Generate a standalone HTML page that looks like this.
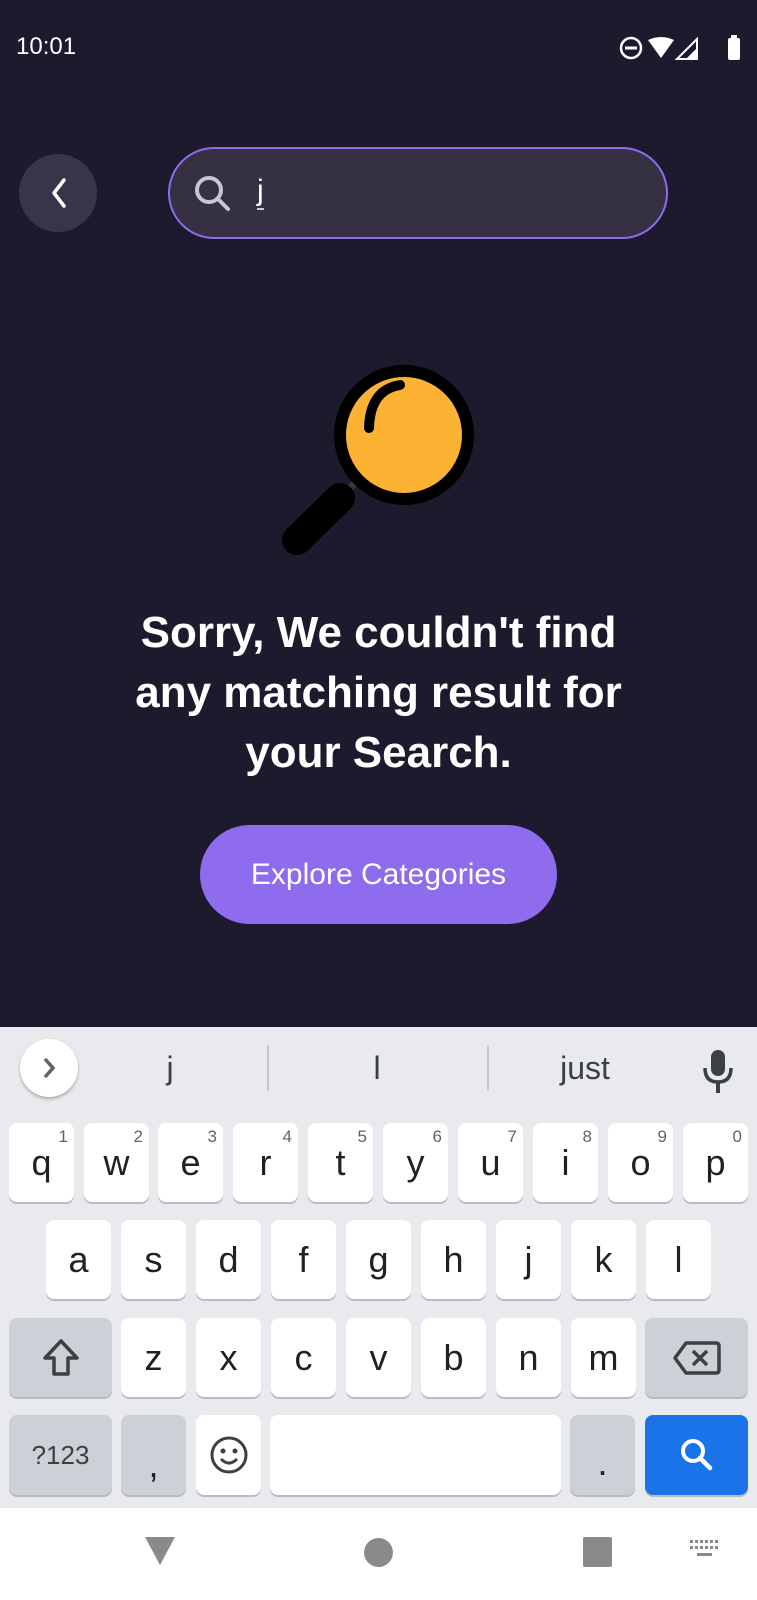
<!DOCTYPE html>
<html><head><meta charset="utf-8"><style>
*{margin:0;padding:0;box-sizing:border-box}
body{width:757px;height:1600px;overflow:hidden;background:#1e1a2d;font-family:"Liberation Sans",sans-serif;position:relative}
.abs{position:absolute}
.key{position:absolute;background:#fff;border-radius:8px;box-shadow:0 2px 0 #b9bcc2;color:#202124;font-size:36px;text-align:center;display:flex;align-items:center;justify-content:center}
.key.g{background:#cdd0d6}
.key sup{position:absolute;top:4px;right:6px;font-size:17px;color:#5f6368}
</style></head><body>
<div class="abs" style="left:16px;top:33px;color:#fff;font-size:24px">10:01</div>
<svg class="abs" style="left:618px;top:34px" width="126" height="28" viewBox="0 0 126 28">
<circle cx="13" cy="14" r="10" fill="none" stroke="#fff" stroke-width="2.5"/><rect x="7" y="12.5" width="12" height="3" fill="#fff"/>
<path d="M30 6 Q43 0 56 6 L43 24 Z" fill="#fff"/>
<path d="M79 5 L79 25 L59 25 Z" fill="none" stroke="#fff" stroke-width="2"/><path d="M79 5 L79 25 L68 25 L79 14 Z" fill="#fff"/>
<rect x="110" y="4" width="12" height="22" rx="2" fill="#fff"/><rect x="113" y="1" width="6" height="4" fill="#fff"/>
</svg>
<div class="abs" style="left:19px;top:154px;width:78px;height:78px;border-radius:50%;background:#38344a"></div>
<svg class="abs" style="left:19px;top:154px" width="78" height="78"><path d="M45 26 L35 39 L45 52" fill="none" stroke="#fff" stroke-width="3.5" stroke-linecap="round" stroke-linejoin="round"/></svg>
<div class="abs" style="left:168px;top:147px;width:500px;height:92px;border-radius:46px;background:#353142;border:2px solid #8e6cef"></div>
<svg class="abs" style="left:192px;top:173px" width="42" height="42"><circle cx="17" cy="17" r="12" fill="none" stroke="#c9c6d0" stroke-width="4"/><path d="M26 26 L36 36" stroke="#c9c6d0" stroke-width="4" stroke-linecap="round"/></svg>
<div class="abs" style="left:257px;top:174px;color:#fff;font-size:30px;border-bottom:2px solid #ccc;line-height:34px">j</div>
<svg class="abs" style="left:270px;top:360px" width="220" height="200">
<path d="M70 138 L90 118" stroke="#3a3a3a" stroke-width="7"/>
<path d="M27 180 L70 138" stroke="#000" stroke-width="30" stroke-linecap="round"/>
<circle cx="134" cy="75" r="64" fill="#fcb334" stroke="#000" stroke-width="12"/>
<path d="M99 68 Q100 30 130 25" fill="none" stroke="#000" stroke-width="10" stroke-linecap="round"/>
</svg>
<div class="abs" style="left:0;top:603px;width:757px;text-align:center;color:#fff;font-weight:bold;font-size:44px;line-height:60px">Sorry, We couldn't find<br>any matching result for<br>your Search.</div>
<div class="abs" style="left:200px;top:825px;width:357px;height:99px;border-radius:50px;background:#8e6ced;color:#fff;font-size:30px;display:flex;align-items:center;justify-content:center">Explore Categories</div>

<div class="abs" style="left:0;top:1027px;width:757px;height:481px;background:#e8eaed"></div>
<div class="abs" style="left:20px;top:1039px;width:58px;height:58px;border-radius:50%;background:#fff;box-shadow:0 2px 3px #aaa"></div>
<svg class="abs" style="left:20px;top:1039px" width="58" height="58"><path d="M25 20 L33 29 L25 38" fill="none" stroke="#5f6368" stroke-width="3.5"/></svg>
<div class="abs" style="left:120px;top:1050px;width:100px;text-align:center;font-size:32px;color:#3c4043">j</div>
<div class="abs" style="left:267px;top:1045px;width:2px;height:46px;background:#c4c6ca"></div>
<div class="abs" style="left:327px;top:1050px;width:100px;text-align:center;font-size:32px;color:#3c4043">l</div>
<div class="abs" style="left:487px;top:1045px;width:2px;height:46px;background:#c4c6ca"></div>
<div class="abs" style="left:535px;top:1050px;width:100px;text-align:center;font-size:32px;color:#3c4043">just</div>
<svg class="abs" style="left:700px;top:1048px" width="36" height="50"><rect x="11" y="2" width="14" height="26" rx="7" fill="#3c4043"/><path d="M5 20 Q5 34 18 34 Q31 34 31 20" fill="none" stroke="#3c4043" stroke-width="3.5"/><rect x="16" y="33" width="4" height="12" fill="#3c4043"/></svg>

<div class="key" style="left:9px;top:1123px;width:65px;height:79px">q<sup>1</sup></div>
<div class="key" style="left:84px;top:1123px;width:65px;height:79px">w<sup>2</sup></div>
<div class="key" style="left:158px;top:1123px;width:65px;height:79px">e<sup>3</sup></div>
<div class="key" style="left:233px;top:1123px;width:65px;height:79px">r<sup>4</sup></div>
<div class="key" style="left:308px;top:1123px;width:65px;height:79px">t<sup>5</sup></div>
<div class="key" style="left:383px;top:1123px;width:65px;height:79px">y<sup>6</sup></div>
<div class="key" style="left:458px;top:1123px;width:65px;height:79px">u<sup>7</sup></div>
<div class="key" style="left:533px;top:1123px;width:65px;height:79px">i<sup>8</sup></div>
<div class="key" style="left:608px;top:1123px;width:65px;height:79px">o<sup>9</sup></div>
<div class="key" style="left:683px;top:1123px;width:65px;height:79px">p<sup>0</sup></div>

<div class="key" style="left:46px;top:1220px;width:65px;height:79px">a</div>
<div class="key" style="left:121px;top:1220px;width:65px;height:79px">s</div>
<div class="key" style="left:196px;top:1220px;width:65px;height:79px">d</div>
<div class="key" style="left:271px;top:1220px;width:65px;height:79px">f</div>
<div class="key" style="left:346px;top:1220px;width:65px;height:79px">g</div>
<div class="key" style="left:421px;top:1220px;width:65px;height:79px">h</div>
<div class="key" style="left:496px;top:1220px;width:65px;height:79px">j</div>
<div class="key" style="left:571px;top:1220px;width:65px;height:79px">k</div>
<div class="key" style="left:646px;top:1220px;width:65px;height:79px">l</div>

<div class="key g" style="left:9px;top:1318px;width:103px;height:79px"><svg width="40" height="42"><path d="M20 4 L36 21 L27 21 L27 37 L13 37 L13 21 L4 21 Z" fill="none" stroke="#3c4043" stroke-width="3.5" stroke-linejoin="round"/></svg></div>
<div class="key" style="left:121px;top:1318px;width:65px;height:79px">z</div>
<div class="key" style="left:196px;top:1318px;width:65px;height:79px">x</div>
<div class="key" style="left:271px;top:1318px;width:65px;height:79px">c</div>
<div class="key" style="left:346px;top:1318px;width:65px;height:79px">v</div>
<div class="key" style="left:421px;top:1318px;width:65px;height:79px">b</div>
<div class="key" style="left:496px;top:1318px;width:65px;height:79px">n</div>
<div class="key" style="left:571px;top:1318px;width:65px;height:79px">m</div>
<div class="key g" style="left:645px;top:1318px;width:103px;height:79px"><svg width="50" height="38"><path d="M14 4 L44 4 Q47 4 47 7 L47 31 Q47 34 44 34 L14 34 L3 19 Z" fill="none" stroke="#3c4043" stroke-width="3.5" stroke-linejoin="round"/><path d="M21 12 L35 26 M35 12 L21 26" stroke="#3c4043" stroke-width="3.5"/></svg></div>

<div class="key g" style="left:9px;top:1415px;width:103px;height:80px;font-size:26px;color:#3c4043">?123</div>
<div class="key g" style="left:121px;top:1415px;width:65px;height:80px"><span style="margin-top:20px">,</span></div>
<div class="key" style="left:196px;top:1415px;width:65px;height:80px"><svg width="40" height="40"><circle cx="20" cy="20" r="17" fill="none" stroke="#3c4043" stroke-width="3"/><circle cx="14" cy="16" r="2.5" fill="#3c4043"/><circle cx="26" cy="16" r="2.5" fill="#3c4043"/><path d="M12 24 Q20 32 28 24" fill="none" stroke="#3c4043" stroke-width="3"/></svg></div>
<div class="key" style="left:270px;top:1415px;width:291px;height:80px"></div>
<div class="key g" style="left:570px;top:1415px;width:65px;height:80px"><span style="margin-top:16px">.</span></div>
<div class="key" style="left:645px;top:1415px;width:103px;height:80px;background:#1a73e8"><svg width="40" height="40"><circle cx="16" cy="16" r="10" fill="none" stroke="#fff" stroke-width="4"/><path d="M23 23 L33 33" stroke="#fff" stroke-width="4.5" stroke-linecap="round"/></svg></div>

<div class="abs" style="left:0;top:1508px;width:757px;height:92px;background:#fff"></div>
<svg class="abs" style="left:143px;top:1535px" width="34" height="32"><path d="M2 2 L32 2 L17 30 Z" fill="#8a8a8a"/></svg>
<div class="abs" style="left:364px;top:1538px;width:29px;height:29px;border-radius:50%;background:#8a8a8a"></div>
<div class="abs" style="left:583px;top:1537px;width:29px;height:30px;border-radius:2px;background:#8a8a8a"></div>
<svg class="abs" style="left:690px;top:1540px" width="32" height="24"><g fill="#8a8a8a"><rect x="0" y="0" width="3" height="3"/><rect x="5" y="0" width="3" height="3"/><rect x="10" y="0" width="3" height="3"/><rect x="15" y="0" width="3" height="3"/><rect x="20" y="0" width="3" height="3"/><rect x="25" y="0" width="3" height="3"/><rect x="0" y="6" width="3" height="3"/><rect x="5" y="6" width="3" height="3"/><rect x="10" y="6" width="3" height="3"/><rect x="15" y="6" width="3" height="3"/><rect x="20" y="6" width="3" height="3"/><rect x="25" y="6" width="3" height="3"/><rect x="7" y="13" width="15" height="3"/></g></svg>
</body></html>
